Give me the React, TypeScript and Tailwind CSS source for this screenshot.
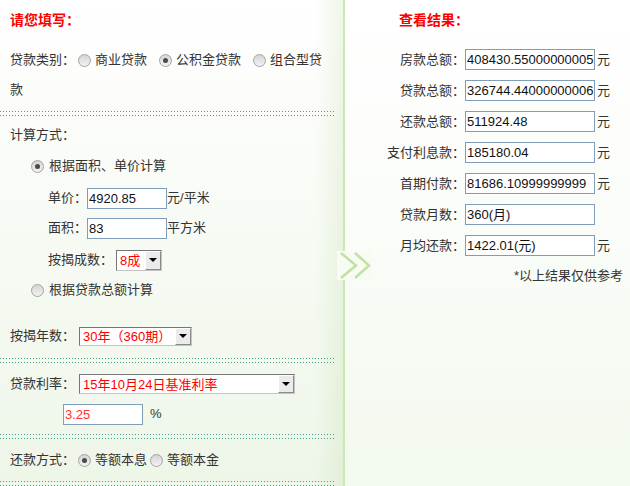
import type { ReactNode } from 'react';

const FONT = '"Liberation Sans","Noto Sans CJK SC",sans-serif';

function Radio({ checked = false }: { checked?: boolean }) {
  return (
    <span className="inline-flex w-[13px] h-[13px] rounded-full border border-[#a3a3a3] bg-[linear-gradient(to_bottom,#d4d4d4,#f3f3f3)] items-center justify-center align-[-1px] mx-[3px]">
      {checked && <span className="block w-[5px] h-[5px] rounded-full bg-[#4a4a4a]" />}
    </span>
  );
}

function Dots() {
  return (
    <div className="flex flex-col gap-[3px] mr-[8px]">
      <div className="h-px bg-[repeating-linear-gradient(to_right,#4a9e8b_0_1px,transparent_1px_3px)]" />
      <div className="h-px bg-[repeating-linear-gradient(to_right,#4a9e8b_0_1px,transparent_1px_3px)]" />
    </div>
  );
}

function Select({ cls, children }: { cls: string; children: ReactNode }) {
  return (
    <div className={`flex bg-white border border-[#767676] border-r-[#c4c4c4] border-b-[#c4c4c4] ${cls}`}>
      <div className="flex-1 flex items-center pl-[3px] text-[#ff0000] text-[13px] leading-none overflow-hidden whitespace-nowrap">
        {children}
      </div>
      <div className="w-[16px] flex items-center justify-center bg-[#ebebeb] border border-t-white border-l-white border-r-[#8a8a8a] border-b-[#8a8a8a]">
        <span className="block w-0 h-0 border-l-[4px] border-r-[4px] border-t-[4px] border-l-transparent border-r-transparent border-t-black" />
      </div>
    </div>
  );
}

function Field({ value, cls = 'w-[80px]', red = false }: { value: string; cls?: string; red?: boolean }) {
  return (
    <div
      className={`h-[21px] bg-white border border-[#7f9db9] pl-px flex items-center text-[13px] leading-none whitespace-nowrap overflow-hidden ${cls} ${
        red ? 'text-[#ff3030]' : 'text-[#111]'
      }`}
    >
      {value}
    </div>
  );
}

const RESULTS: [string, string, boolean][] = [
  ['房款总额：', '408430.55000000005', true],
  ['贷款总额：', '326744.44000000006', true],
  ['还款总额：', '511924.48', true],
  ['支付利息款：', '185180.04', true],
  ['首期付款：', '81686.10999999999', true],
  ['贷款月数：', '360(月)', false],
  ['月均还款：', '1422.01(元)', true],
];

export default function App() {
  return (
    <div
      className="relative flex w-[630px] h-[486px] overflow-hidden text-[13px] text-[#333]"
      style={{ fontFamily: FONT }}
    >
      {/* left: form */}
      <div className="w-[343px] shrink-0 bg-[linear-gradient(to_right,transparent_92%,rgba(190,220,165,0.25)),linear-gradient(to_bottom,#ffffff_0%,#fcfdfb_18%,#eef6e8_100%)]">
        <div className="px-[10px]">
          <div className="h-[40px] flex items-center text-[14px] font-bold text-[#ff0000]">请您填写：</div>
          <div className="mt-[5px] leading-[30px] w-[323px]">
            <div className="h-[30px] flex items-center whitespace-nowrap">
              <span>贷款类别：</span>
              <Radio />
              <span className="mr-[9px] ml-px">商业贷款</span>
              <Radio checked />
              <span className="mr-[9px] ml-px">公积金贷款</span>
              <Radio />
              <span className="ml-px">组合型贷</span>
            </div>
            <div className="h-[30px]">款</div>
          </div>
        </div>
        <div className="mt-[6px]">
          <Dots />
        </div>

        <div className="px-[10px] mt-[4px]">
          <div className="h-[30px] flex items-center">计算方式：</div>
          <div className="h-[32px] flex items-center pl-[18px]">
            <Radio checked />
            <span className="ml-[2px]">根据面积、单价计算</span>
          </div>
          <div className="h-[32px] flex items-center pl-[38px]">
            <span>单价：</span>
            <Field value="4920.85" />
            <span>元/平米</span>
          </div>
          <div className="h-[28px] flex items-center pl-[38px]">
            <span>面积：</span>
            <Field value="83" />
            <span>平方米</span>
          </div>
          <div className="h-[36px] flex items-center pl-[38px]">
            <span className="mr-[3px]">按揭成数：</span>
            <Select cls="w-[46px] h-[21px]">8成</Select>
          </div>
          <div className="h-[24px] flex items-center pl-[18px]">
            <Radio />
            <span className="ml-[2px]">根据贷款总额计算</span>
          </div>
          <div className="h-[28px] mt-[20px] flex items-center">
            <span className="mr-[4px]">按揭年数：</span>
            <Select cls="w-[113px] h-[19px]">30年（360期）</Select>
          </div>
        </div>
        <div className="mt-[8px]">
          <Dots />
        </div>

        <div className="px-[10px] mt-[6px]">
          <div className="h-[30px] flex items-center">
            <span className="mr-[4px]">贷款利率：</span>
            <Select cls="w-[216px] h-[20px]">15年10月24日基准利率</Select>
          </div>
          <div className="h-[30px] flex items-center pl-[53px]">
            <Field value="3.25" red />
            <span className="ml-[7px]">%</span>
          </div>
        </div>
        <div className="mt-[5px]">
          <Dots />
        </div>

        <div className="px-[10px] mt-[6px]">
          <div className="h-[30px] flex items-center">
            <span>还款方式：</span>
            <Radio checked />
            <span className="ml-[1px]">等额本息</span>
            <Radio />
            <span className="ml-[1px]">等额本金</span>
          </div>
        </div>
        <div className="mt-[6px]">
          <Dots />
        </div>
      </div>

      <div className="w-[2px] shrink-0 bg-[#cde6b6]" />

      {/* right: results */}
      <div className="flex-1 bg-[linear-gradient(to_bottom,#ffffff_0%,#fdfefc_25%,#f2f9ee_100%)]">
        <div className="h-[40px] flex items-center pl-[54px] text-[14px] font-bold text-[#ff0000]">查看结果：</div>
        <div className="mt-[4px]">
          {RESULTS.map(([label, value, unit]) => (
            <div key={label} className="h-[31px] flex items-center">
              <span className="w-[120px] text-right">{label}</span>
              <Field value={value} cls="w-[130px]" />
              {unit && <span className="ml-[2px]">元</span>}
            </div>
          ))}
        </div>
        <div className="h-[30px] flex items-center justify-end pr-[7px]">*以上结果仅供参考</div>
      </div>

      {/* arrow over the divider */}
      <div className="absolute left-[337px] top-[251px] w-[34px] h-[29px] bg-[#f7fbf4]">
        <svg width="34" height="29" viewBox="0 0 34 29" fill="none">
          <polyline points="4,2 19,14.5 4,27" stroke="#bfe2a2" strokeWidth="2.5" />
          <polyline points="18,2 32,14.5 18,27" stroke="#bfe2a2" strokeWidth="2.5" />
        </svg>
      </div>
    </div>
  );
}
